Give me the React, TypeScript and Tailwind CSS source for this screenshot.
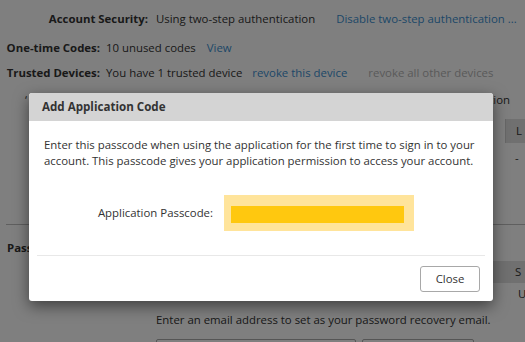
export default function App() {
  return (
    <div className="relative w-[525px] h-[342px] overflow-hidden bg-white text-[11.4px] leading-[16px] text-[#333] font-['Open_Sans','Noto_Sans',sans-serif]">
      {/* page behind the dialog */}
      <div className="flex flex-col">
        <div className="flex mt-[11px] whitespace-nowrap">
          <span className="w-[148px] text-right font-bold">Account Security:</span>
          <span className="ml-[8px]">Using two-step authentication</span>
          <span className="ml-[21px] text-[#3b8fd0]">Disable two-step authentication ...</span>
        </div>
        <div className="flex mt-[13px] whitespace-nowrap">
          <span className="w-[100px] text-right font-bold">One-time Codes:</span>
          <span className="ml-[6px]">10 unused codes</span>
          <span className="ml-[11px] text-[#3b8fd0]">View</span>
        </div>
        <div className="flex mt-[9px] whitespace-nowrap">
          <span className="w-[100px] text-right font-bold">Trusted Devices:</span>
          <span className="ml-[6px]">You have 1 trusted device</span>
          <span className="ml-[10px] text-[#3b8fd0]">revoke this device</span>
          <span className="ml-[21px] text-[#b4b4b4]">revoke all other devices</span>
        </div>
        <div className="flex justify-between mt-[11px] whitespace-nowrap">
          <span className="pl-[25px]">‘</span>
          <span className="pr-[15px]">Add an application</span>
        </div>
        <div className="flex justify-end mt-[11px]">
          <div className="w-[20px]">
            <div className="h-[24px] bg-[#e0e0e0] border-l border-[#cfcfcf] pl-[10px] flex items-center">L</div>
            <div className="pl-[10px] mt-[7px]">-</div>
          </div>
        </div>
        <div className="mt-[58px] ml-[6px] border-t border-[#bfbfbf]" />
        <div className="mt-[15px] pl-[7px] font-bold">Password Recovery</div>
        <div className="flex justify-end mt-[5px]">
          <div className="w-[32px]">
            <div className="h-[22px] bg-[#e0e0e0] pl-[22px] flex items-center">S</div>
            <div className="pl-[25px] mt-[3px]">U</div>
          </div>
        </div>
        <div className="mt-[10px] pl-[156px] whitespace-nowrap">
          Enter an email address to set as your password recovery email.
        </div>
        <div className="flex gap-[6px] mt-[11px] pl-[156px]">
          <div className="w-[200px] h-[26px] border border-[#aaa] rounded-[2px]" />
          <div className="w-[112px] h-[26px] border border-[#aaa] rounded-[2px]" />
        </div>
      </div>

      {/* overlay */}
      <div className="absolute inset-0 bg-black/50" />

      {/* dialog */}
      <div className="absolute left-[29px] top-[93px] w-[464px] h-[208px] bg-white rounded-[3px] overflow-hidden shadow-[0_5px_15px_rgba(0,0,0,0.5)] flex flex-col">
        <div className="h-[28px] bg-[#d4d4d4] flex items-center pl-[13px] font-bold text-[11.6px] text-[#333]">
          Add Application Code
        </div>
        <div className="px-[15px] pt-[16px] text-[#333]">
          Enter this passcode when using the application for the first time to sign in to your account. This passcode gives your application permission to access your account.
        </div>
        <div className="flex items-center mt-[26px]">
          <span className="w-[184px] text-right">Application Passcode:</span>
          <div className="ml-[11px] w-[190px] h-[36px] bg-[#ffe49b] pl-[7px] pt-[11px]">
            <div className="w-[173px] h-[17px] bg-[#ffc80f]" />
          </div>
        </div>
        <div className="mx-[8px] mt-[24px] border-t border-[#e8e8e8]" />
        <div className="flex justify-end pr-[13px] mt-[10px]">
          <button className="w-[60px] h-[26px] border border-[#a8a8a8] rounded-[3px] text-[11.4px] text-[#333] bg-white">
            Close
          </button>
        </div>
      </div>
    </div>
  )
}
